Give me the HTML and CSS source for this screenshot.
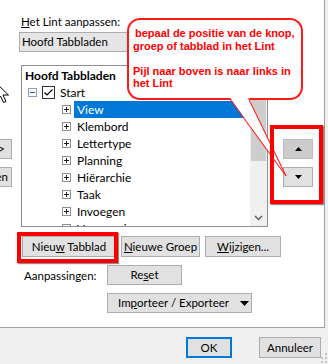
FILE: index.html
```html
<!DOCTYPE html>
<html>
<head>
<meta charset="utf-8">
<link rel="stylesheet" href="styles.css">
</head>
<body>
<div class="window">
  <div class="panel">
    <div class="leftcol">
      <button class="btn side side-add">Toevoegen &gt;&gt;</button>
      <button class="btn side side-del">&lt;&lt; Verwijderen</button>
    </div>

    <div class="center">
      <div class="lbl"><u>H</u>et Lint aanpassen:</div>
      <div class="dropdown">Hoofd Tabbladen</div>

      <div class="tree">
        <div class="tree-body">
          <div class="row head">Hoofd Tabbladen</div>
          <div class="row lvl1">
            <span class="exp minus"></span>
            <span class="chk"><svg width="11" height="11" viewBox="0 0 11 11"><path d="M1.5 5.5 L4 8 L9.5 2.5" fill="none" stroke="#000" stroke-width="1.2"/></svg></span>
            <span class="txt">Start</span>
          </div>
          <div class="row lvl2 sel"><span class="exp plus"></span><span class="txt">View</span></div>
          <div class="row lvl2"><span class="exp plus"></span><span class="txt">Klembord</span></div>
          <div class="row lvl2"><span class="exp plus"></span><span class="txt">Lettertype</span></div>
          <div class="row lvl2"><span class="exp plus"></span><span class="txt">Planning</span></div>
          <div class="row lvl2"><span class="exp plus"></span><span class="txt">Hiërarchie</span></div>
          <div class="row lvl2"><span class="exp plus"></span><span class="txt">Taak</span></div>
          <div class="row lvl2"><span class="exp plus"></span><span class="txt">Invoegen</span></div>
          <div class="row lvl2"><span class="exp plus"></span><span class="txt">Vormgeving</span></div>
        </div>
        <div class="vscroll">
          <div class="sb-arrow"><svg width="9" height="6" viewBox="0 0 9 6"><path d="M1 5 L4.5 1.5 L8 5" fill="none" stroke="#606060" stroke-width="1.5"/></svg></div>
          <div class="sb-thumb"></div>
          <div class="sb-track"></div>
          <div class="sb-arrow"><svg width="9" height="6" viewBox="0 0 9 6"><path d="M1 1 L4.5 4.5 L8 1" fill="none" stroke="#606060" stroke-width="1.5"/></svg></div>
        </div>
      </div>

      <div class="btnrow">
        <button class="btn b-new hl">Nieu<u>w</u> Tabblad</button>
        <button class="btn b-group"><u>N</u>ieuwe Groep</button>
        <button class="btn b-edit"><u>W</u>ijzigen...</button>
      </div>
      <div class="custrow">
        <span class="custlbl">Aanpassingen:</span>
        <button class="btn b-reset">Re<u>s</u>et</button>
      </div>
      <div class="improw">
        <button class="btn b-imp">Im<u>p</u>orteer / Exporteer <svg class="caret" width="9" height="5" viewBox="0 0 9 5"><path d="M0 0 H9 L4.5 5 Z" fill="#000"/></svg></button>
      </div>
    </div>

    <div class="rightcol">
      <div class="redbox">
        <button class="btn mv mv-up"><svg width="7" height="4" viewBox="0 0 7 4"><path d="M0 4 H7 L3.5 0 Z" fill="#000"/></svg></button>
        <button class="btn mv"><svg width="7" height="4" viewBox="0 0 7 4"><path d="M0 0 H7 L3.5 4 Z" fill="#000"/></svg></button>
      </div>
    </div>

    <div class="callout">
      <p class="c-line c-first">bepaal de positie van de knop,</p>
      <p class="c-line">groep of tabblad in het Lint</p>
      <p class="c-line c-gap">Pijl naar boven is naar links in</p>
      <p class="c-line">het Lint</p>
    </div>
    <svg class="tail" width="328" height="200" viewBox="0 0 328 200">
      <polygon points="229.5,97 286,176 248.5,97" fill="#fff"/>
      <line x1="229.5" y1="98.5" x2="286" y2="176" stroke="#ff2020" stroke-width="1.1"/>
      <line x1="248.5" y1="98.5" x2="286" y2="176" stroke="#ff2020" stroke-width="1.1"/>
    </svg>
    <svg class="cursor" width="14" height="22" viewBox="0 0 14 22">
      <path d="M0.5 0.5 L0.5 17 L4.5 13 L7.5 19.5 L10 18.5 L7 12 L12.5 12 Z" fill="#fff" stroke="#000" stroke-width="1"/>
    </svg>
  </div>

  <div class="footer">
    <button class="btn b-ok">OK</button>
    <button class="btn b-cancel">Annuleer</button>
  </div>
  <svg class="grip" width="8" height="10" viewBox="0 0 8 10">
    <rect x="6" y="0" width="2" height="2" fill="#c4c4c4"/>
    <rect x="6" y="4" width="2" height="2" fill="#c4c4c4"/>
    <rect x="2" y="4" width="2" height="2" fill="#c4c4c4"/>
    <rect x="6" y="8" width="2" height="2" fill="#c4c4c4"/>
    <rect x="2" y="8" width="2" height="2" fill="#c4c4c4"/>
  </svg>
</div>
</body>
</html>
```
FILE: styles.css
```css
* { box-sizing: border-box; }
html, body { margin: 0; padding: 0; }
body {
  width: 328px;
  height: 364px;
  overflow: hidden;
  background: #f0f0f0;
  font-family: Lato, "Liberation Sans", sans-serif;
  font-size: 11.5px;
  color: #000;
}
u { text-decoration: underline; text-underline-offset: 1px; }

.window {
  position: relative;
  width: 328px;
  height: 364px;
  background: #f0f0f0;
}

.panel {
  position: relative;
  display: flex;
  width: 325px;
  height: 328px;
  padding-top: 14px;
  background: #fff;
  border-right: 1px solid #a0a0a0;
  border-bottom: 1px solid #a0a0a0;
}

.btn {
  font: inherit;
  color: #000;
  margin: 0;
  padding: 0;
  background: #e1e1e1;
  border: 1px solid #adadad;
  border-radius: 0;
  height: 21px;
  line-height: 18px;
  text-align: center;
  white-space: nowrap;
  flex-shrink: 0;
}

/* left (cut off) column */
.leftcol {
  width: 12px;
  overflow: hidden;
  display: flex;
  flex-direction: column;
  align-items: flex-end;
  gap: 8px;
  padding-top: 125px;
}
.side { width: 90px; height: 20px; text-align: right; flex-shrink: 0; }
.side-add { padding-right: 6px; }
.side-del { padding-right: 3px; }

/* center column */
.center {
  margin-left: 9px;
  width: 247px;
  display: flex;
  flex-direction: column;
}
.lbl { height: 15px; line-height: 15px; }
.dropdown {
  margin-top: 3px;
  margin-left: -2px;
  width: 249px;
  height: 20px;
  line-height: 18px;
  padding-left: 2px;
  background: #e5e5e5;
  border: 1px solid #acacac;
}

.tree {
  margin-top: 13px;
  height: 162px;
  border: 1px solid #8e8f8f;
  display: flex;
  overflow: hidden;
}
.tree-body {
  flex: 1;
  padding-top: 1px;
  overflow: hidden;
  font-size: 12px;
}
.row {
  height: 17px;
  display: flex;
  align-items: center;
  white-space: nowrap;
}
.head { padding-left: 3px; font-weight: bold; }
.lvl1 { padding-left: 6px; }
.lvl2 { padding-left: 40px; }
.exp {
  position: relative;
  width: 9px;
  height: 9px;
  border: 1px solid #8f8f8f;
  flex-shrink: 0;
}
.exp::before {
  content: "";
  position: absolute;
  left: 1px;
  top: 3px;
  width: 5px;
  height: 1px;
  background: #222;
}
.plus::after {
  content: "";
  position: absolute;
  left: 3px;
  top: 1px;
  width: 1px;
  height: 5px;
  background: #222;
}
.minus { border-color: #8aa0c0; }
.minus::before { background: #2a5aa8; }
.chk {
  width: 13px;
  height: 13px;
  margin-left: 5px;
  border: 1px solid #333;
  display: flex;
  align-items: center;
  justify-content: center;
  flex-shrink: 0;
}
.lvl1 .txt { margin-left: 5px; }
.lvl2 .txt {
  margin-left: 3px;
  padding-left: 3px;
  height: 17px;
  line-height: 17px;
  flex: 1;
}
.sel .txt { background: #0078d7; color: #fff; }

.vscroll {
  width: 17px;
  background: #f0f0f0;
  display: flex;
  flex-direction: column;
  flex-shrink: 0;
}
.sb-arrow {
  height: 17px;
  display: flex;
  align-items: center;
  justify-content: center;
}
.sb-thumb {
  height: 78px;
  margin: 0 1px;
  background: #cdcdcd;
}
.sb-track { flex: 1; }

.btnrow {
  margin-top: 9px;
  padding-left: 1px;
  display: flex;
  gap: 5px;
}
.b-new { width: 94px; }
.b-group { width: 79px; }
.b-edit { width: 76px; }
.hl { position: relative; }
.hl::after {
  content: "";
  position: absolute;
  left: -6px;
  right: -3px;
  top: -5px;
  bottom: -7px;
  border: 4px solid #ff0000;
  box-shadow: 1px 1px 1px rgba(0,0,0,0.45);
}

.custrow {
  margin-top: 8px;
  display: flex;
  align-items: center;
}
.custlbl { width: 86px; padding-left: 3px; }
.b-reset { width: 75px; height: 20px; }

.improw {
  margin-top: 8px;
  padding-left: 86px;
}
.b-imp {
  width: 145px;
  height: 20px;
  display: flex;
  align-items: center;
  padding-left: 10px;
}
.caret { margin-left: 11px; }

/* right column */
.rightcol {
  margin-left: 2px;
  padding-top: 111px;
}
.redbox {
  position: relative;
  width: 53px;
  height: 79px;
  padding: 14px 0 0 13px;
  display: flex;
  flex-direction: column;
  gap: 8px;
}
.redbox::after {
  content: "";
  position: absolute;
  inset: 0;
  border: 4px solid #ff0000;
  box-shadow: 1px 1px 1px rgba(0,0,0,0.45);
  z-index: 5;
}
.mv {
  width: 30px;
  height: 20px;
  display: flex;
  align-items: center;
  justify-content: center;
}
.mv-up { background: #cccccc; border-color: #bcbcbc; }

/* callout */
.callout {
  position: absolute;
  left: 127px;
  top: 18px;
  width: 176px;
  height: 82px;
  border: 2px solid #ff1a1a;
  border-radius: 13px;
  background: #fff;
  padding: 7px 0 0 4px;
  font-family: "Liberation Sans", Arial, sans-serif;
  font-weight: bold;
  font-size: 11px;
  line-height: 12.5px;
  color: #ff0000;
  z-index: 3;
}
.c-line { margin: 0; white-space: nowrap; }
.c-first { padding-left: 2px; }
.c-gap { margin-top: 12.5px; }

.tail {
  position: absolute;
  left: 0;
  top: 0;
  z-index: 4;
  pointer-events: none;
}
.cursor {
  position: absolute;
  left: -4px;
  top: 83px;
}

/* footer */
.footer {
  display: flex;
  justify-content: flex-end;
  gap: 27px;
  padding: 9px 7px 0 0;
}
.b-ok { width: 46px; border: 2px solid #0078d7; line-height: 17px; }
.b-cancel { width: 62px; }
.grip {
  position: absolute;
  right: 1px;
  bottom: 1px;
}
```
